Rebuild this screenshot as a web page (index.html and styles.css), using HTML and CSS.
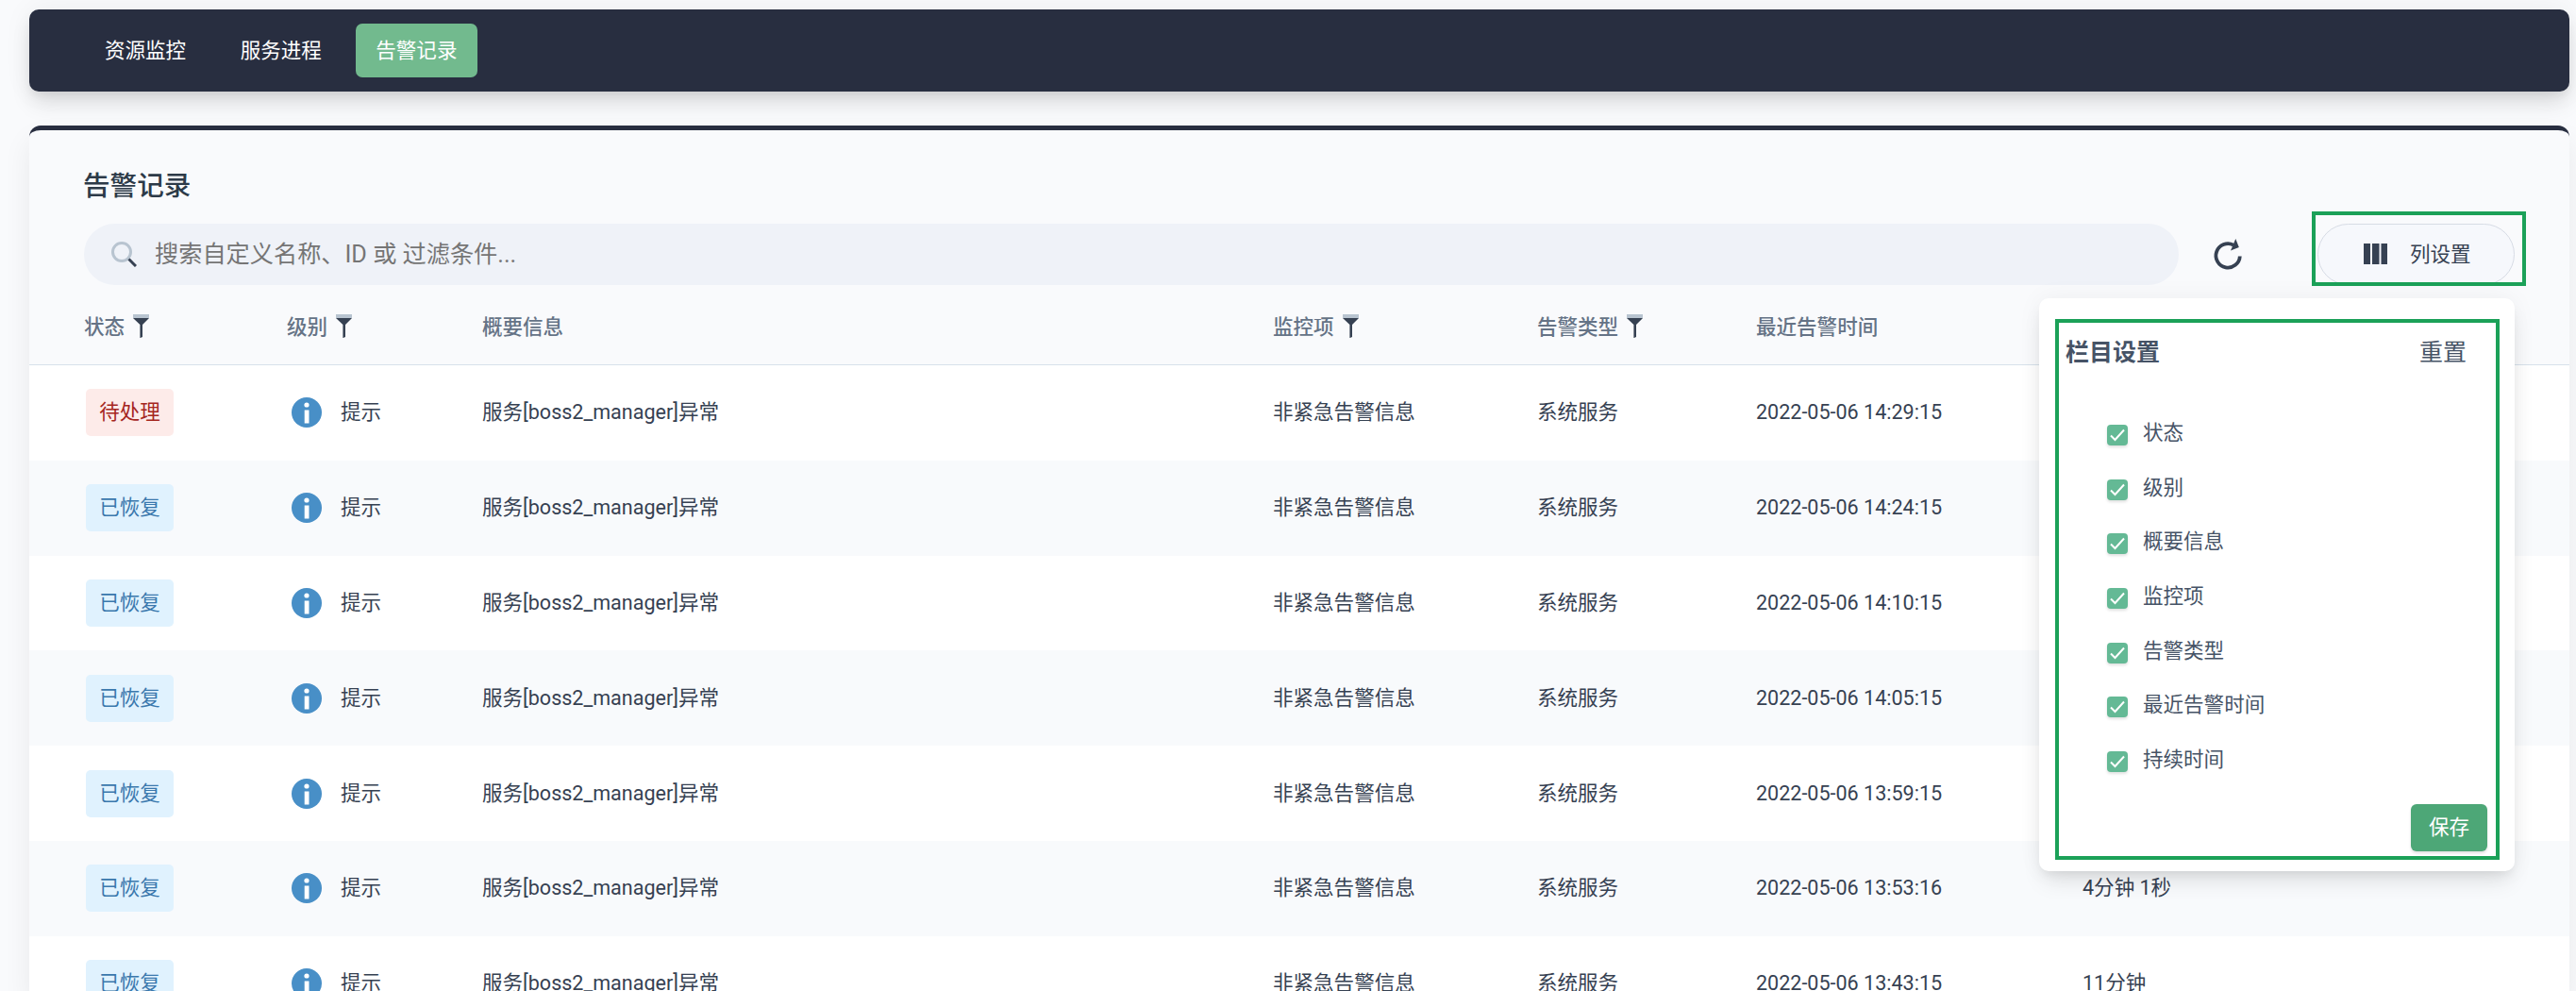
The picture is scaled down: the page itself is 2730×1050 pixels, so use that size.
FILE: index.html
```html
<!DOCTYPE html>
<html lang="zh-CN">
<head>
<meta charset="utf-8">
<title>告警记录</title>
<link rel="stylesheet" href="styles.css">
</head>
<body>
<svg class="defs" aria-hidden="true">
  <symbol id="funnel" viewBox="0 0 17 25"><path class="light" d="M0 0h17v4H0z"/><path d="M0 4h17L10 11v13l-2.6 1.2V11z"/></symbol>
  <symbol id="info" viewBox="0 0 32 32"><circle class="disc" cx="16" cy="16" r="16"/><circle class="mark" cx="16" cy="8" r="2.6"/><path class="mark" d="M13.7 13.5h4.8v14h-4.8z"/></symbol>
</svg>
<nav class="nav">
  <a class="tab">资源监控</a><a class="tab">服务进程</a><a class="tab active">告警记录</a>
</nav>
<main class="panel">
  <h1 class="title">告警记录</h1>
  <div class="toolbar">
    <div class="search">
      <svg class="glass" viewBox="0 0 27 27"><circle cx="11" cy="11" r="9.5"/><path d="M18.5 18.5 26 26"/></svg>
      <span>搜索自定义名称、ID 或 过滤条件...</span>
    </div>
    <svg class="refresh" viewBox="0 0 30 33"><path class="arc" d="M26.8 18.5A12.7 12.7 0 1 1 20 6.6"/><path d="M22.3 0l3.5 9L17 12.5z"/></svg>
    <div class="columns">
      <button class="columns-btn"><svg class="bars" viewBox="0 0 26 22"><path d="M0 0h7v22H0zM9 0h7.5v22H9zM18.5 0H25v22h-6.5z"/></svg>列设置</button>
      <div class="mark-box mark-button"></div>
      <section class="popover">
        <div class="mark-box mark-popover"></div>
        <header class="pop-head"><b>栏目设置</b><span>重置</span></header>
        <ul class="checks" id="checks"></ul>
        <button class="save">保存</button>
      </section>
    </div>
  </div>
  <div class="row head">
    <span>状态<svg><use href="#funnel"/></svg></span><span>级别<svg><use href="#funnel"/></svg></span><span>概要信息</span><span>监控项<svg><use href="#funnel"/></svg></span><span>告警类型<svg><use href="#funnel"/></svg></span><span>最近告警时间</span><span>持续时间</span>
  </div>
  <div class="rows" id="rows"></div>
</main>
<script src="app.js"></script>
</body>
</html>
```
FILE: styles.css
```css
* { box-sizing: border-box; }
body {
  display: flex;
  flex-direction: column;
  margin: 0;
  height: 1050px;
  overflow: hidden;
  padding: 10px 7px 0 31px;
  background: #f9fafc;
  color: #364152;
  font: 21.54px/32px Roboto, "Noto Sans CJK SC", sans-serif;
}
button { font: inherit; }
.defs { position: absolute; width: 0; height: 0; }
.nav {
  display: flex;
  flex: none;
  align-items: center;
  gap: 14.5px;
  height: 87px;
  padding-left: 58.5px;
  border-radius: 10px;
  background: #282e40;
  color: #fff;
  box-shadow: 0 15px 23px -3px rgba(0, 0, 0, .11), 0 6px 10px -2px rgba(0, 0, 0, .06), 0 0 30px rgba(0, 0, 0, .06);
}
.tab { height: 57px; padding: 0 21.5px; line-height: 58px; border-radius: 7px; }
.tab.active { background: #72ba8e; }
.panel {
  flex: 1;
  min-height: 0;
  margin-top: 36px;
  border-top: 5px solid #282e40;
  border-radius: 12px 12px 0 0;
  background: #f9fafc;
  box-shadow: 0 15px 30px rgba(0, 0, 0, .07);
}
.title { margin: 0; padding: 38px 0 0 57px; font-size: 28.6px; line-height: 42px; font-weight: 500; color: #2d3a48; }
.toolbar { display: flex; margin-top: 19px; padding-left: 58px; }
.search {
  display: flex;
  align-items: center;
  width: 2220px;
  height: 65px;
  padding-left: 29px;
  border-radius: 33px;
  background: #eff2f8;
  color: #757575;
  font-size: 25.2px;
}
.glass { width: 27px; height: 27px; margin: 0 19px 0 0; fill: none; stroke: #b8c4d0; stroke-width: 3; }
.glass path { stroke: #364152; }
.refresh { width: 30px; height: 33px; margin: 16px 0 0 38px; fill: #364152; overflow: visible; }
.refresh .arc { fill: none; stroke: #364152; stroke-width: 3.8; }
.columns { position: relative; margin-left: 79px; }
.columns-btn {
  display: flex;
  align-items: center;
  width: 209px;
  height: 65px;
  padding: 0 0 0 48px;
  gap: 23px;
  border: 1px solid #d7dce5;
  border-radius: 33px;
  background: #f6f8fc;
  color: #364152;
}
.bars { width: 26px; height: 22px; margin-top: -1px; fill: #364152; }
.mark-box { position: absolute; border: 4px solid #1ba158; pointer-events: none; }
.mark-button { left: -6px; top: -13px; width: 227px; height: 79px; }
.popover {
  position: absolute;
  z-index: 2;
  right: 0;
  top: 79px;
  width: 504px;
  height: 607px;
  padding: 40px 29px 20px 28px;
  border-radius: 10px;
  background: #fff;
  box-shadow: 0 15px 23px -5px rgba(0, 0, 0, .1), 0 6px 10px -3px rgba(0, 0, 0, .05), 0 0 26px rgba(0, 0, 0, .05);
}
.mark-popover { left: 17px; top: 22px; width: 471px; height: 573px; }
.pop-head { display: flex; justify-content: space-between; padding-right: 22px; font-size: 25px; line-height: 36px; color: #465366; }
.checks { margin: 38px 0 0; padding: 0 0 0 44px; list-style: none; }
.checks li { display: flex; align-items: center; gap: 16px; height: 57.7px; color: #465366; }
.checks svg { width: 22px; height: 22px; margin-top: 4px; border-radius: 4px; background: #64b995; fill: none; stroke: #fff; stroke-width: 2; box-shadow: 0 2px 3px rgba(0, 0, 0, .12); }
.save { display: block; width: 81px; height: 50px; margin: 18px 0 0 auto; padding: 0; border: 0; border-radius: 6px; background: #4da777; color: #fff; box-shadow: 0 2px 3px rgba(0, 0, 0, .12); }
.row {
  display: grid;
  grid-template-columns: 215px 206px 838px 280px 232px 346px 1fr;
  align-items: center;
  height: 100.8px;
  padding: 0 0 0 59px;
  background: #fff;
}
.row:nth-child(even) { background: #f8fafc; }
.row.head { grid-template-columns: 215px 207px 838px 280px 232px 346px 1fr; height: 85px; padding: 6px 0 0 58px; background: none; border-bottom: 1px solid #d7e1ea; color: #657386; font-weight: 500; }
.head span { display: flex; align-items: center; }
.head svg { width: 17px; height: 25px; margin: -3px 0 0 9px; fill: #364152; overflow: visible; }
.light { fill: #b8c4d0; }
.badge { width: 93px; height: 50px; margin-left: 1px; line-height: 50px; text-align: center; border-radius: 5px; background: #e0f2fe; color: #3a78ad; }
.badge.pending { background: #fdebe9; color: #a5261e; }
.level { display: flex; align-items: center; gap: 20px; padding-left: 4px; }
.level svg { width: 32px; height: 32px; }
.disc { fill: #488fc7; }
.mark { fill: #fff; }
```
FILE: app.js
```js
const labels = ['状态', '级别', '概要信息', '监控项', '告警类型', '最近告警时间', '持续时间'];
document.getElementById('checks').innerHTML = labels.map(t =>
  `<li><svg viewBox="0 0 22 22"><path d="M4 11.5 8.5 16 18 5.5"/></svg>${t}</li>`).join('');

const records = [
  ['14:29:15', ''], ['14:24:15', ''], ['14:10:15', ''], ['14:05:15', ''],
  ['13:59:15', ''], ['13:53:16', '4分钟 1秒'], ['13:43:15', '11分钟']
];
document.getElementById('rows').innerHTML = records.map(([time, duration], i) =>
  `<div class="row"><span class="badge ${i ? '' : 'pending'}">${i ? '已恢复' : '待处理'}</span>` +
  `<span class="level"><svg><use href="#info"/></svg>提示</span><span>服务[boss2_manager]异常</span>` +
  `<span>非紧急告警信息</span><span>系统服务</span><span>2022-05-06 ${time}</span><span>${duration}</span></div>`).join('');
```
